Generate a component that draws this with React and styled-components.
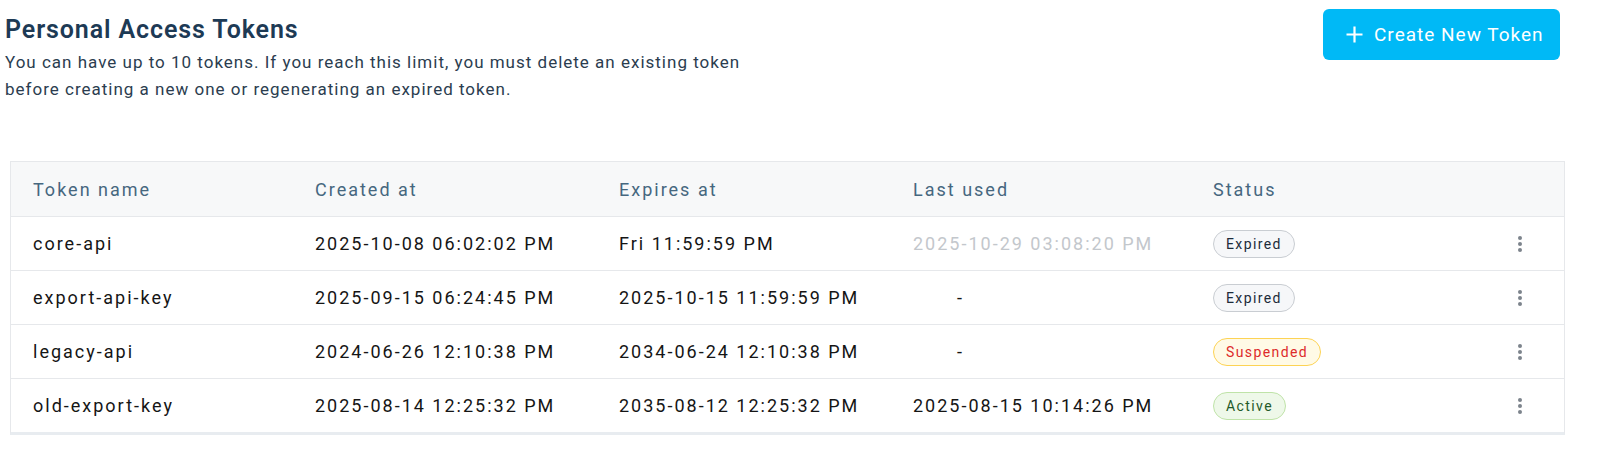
import React from 'react';
import styled, { createGlobalStyle } from 'styled-components';

const GlobalStyle = createGlobalStyle`
  body {
    margin: 0;
    background: #fff;
    font-family: Roboto, 'Liberation Sans', sans-serif;
    color: #1a1a1a;
  }
`;

const Page = styled.div`
  padding: 0 0 0 5px;
`;

const Header = styled.div`
  display: flex;
  justify-content: space-between;
  align-items: flex-start;
  padding-right: 39px;
`;

const Intro = styled.div`
  padding-top: 16px;
`;

const Title = styled.h1`
  margin: 0;
  font-size: 25px;
  font-weight: 600;
  letter-spacing: 0.9px;
  color: #1d3a55;
  line-height: 28px;
`;

const Subtitle = styled.p`
  margin: 5px 0 0;
  width: 760px;
  font-size: 17px;
  line-height: 27px;
  letter-spacing: 1px;
  color: #2b3d4f;
`;

const CreateButton = styled.button`
  margin-top: 9px;
  height: 51px;
  width: 237px;
  padding: 0 0 0 23px;
  display: flex;
  align-items: center;
  gap: 11px;
  border: none;
  border-radius: 6px;
  background: #00b9f6;
  color: #fff;
  font-family: inherit;
  font-size: 19px;
  letter-spacing: 1px;
  cursor: pointer;
`;

const Table = styled.div`
  margin: 58px 34px 0 5px;
  border: 1px solid #e6e8eb;
  border-bottom: 3px solid #e8ecf0;
`;

const Row = styled.div`
  display: grid;
  grid-template-columns: 282px 304px 294px 300px 1fr 60px;
  align-items: center;
  height: 54px;
  padding-left: 22px;
  background: ${(p) => (p.head ? '#f7f8f9' : '#fff')};
  border-top: ${(p) => (p.first ? 'none' : '1px solid #e6e8eb')};
  box-sizing: border-box;
`;

const HeadCell = styled.div`
  font-size: 18px;
  color: #46677f;
  letter-spacing: 2px;
`;

const Cell = styled.div`
  font-size: 18px;
  letter-spacing: 2px;
  white-space: nowrap;
  color: ${(p) => (p.muted ? '#c3c7cc' : '#151515')};
  padding-left: ${(p) => (p.dash ? '44px' : '0')};
`;

const badgeColors = {
  Expired: { border: '#c9cdd2', bg: '#f6f7f9', color: '#1c2b3a' },
  Suspended: { border: '#fdd354', bg: '#fffae6', color: '#dd2a2a' },
  Active: { border: '#bfe3a8', bg: '#eef8e9', color: '#1f5a2a' },
};

const Badge = styled.span`
  display: inline-flex;
  align-items: center;
  height: 28px;
  padding: 0 12px;
  border-radius: 14px;
  box-sizing: border-box;
  font-size: 14px;
  letter-spacing: 1.4px;
  border: 1px solid ${(p) => badgeColors[p.status].border};
  background: ${(p) => badgeColors[p.status].bg};
  color: ${(p) => badgeColors[p.status].color};
`;

const Kebab = styled.div`
  display: flex;
  flex-direction: column;
  align-items: center;
  gap: 2px;
  width: 6px;
  margin-left: 13px;

  span {
    width: 4px;
    height: 4px;
    border-radius: 50%;
    background: #7c848c;
  }
`;

const tokens = [
  {
    name: 'core-api',
    created: '2025-10-08 06:02:02 PM',
    expires: 'Fri 11:59:59 PM',
    lastUsed: '2025-10-29 03:08:20 PM',
    muted: true,
    status: 'Expired',
  },
  {
    name: 'export-api-key',
    created: '2025-09-15 06:24:45 PM',
    expires: '2025-10-15 11:59:59 PM',
    lastUsed: null,
    status: 'Expired',
  },
  {
    name: 'legacy-api',
    created: '2024-06-26 12:10:38 PM',
    expires: '2034-06-24 12:10:38 PM',
    lastUsed: null,
    status: 'Suspended',
  },
  {
    name: 'old-export-key',
    created: '2025-08-14 12:25:32 PM',
    expires: '2035-08-12 12:25:32 PM',
    lastUsed: '2025-08-15 10:14:26 PM',
    status: 'Active',
  },
];

const PlusIcon = () => (
  <svg width="17" height="17" viewBox="0 0 17 17">
    <path d="M8.5 0.5v16M0.5 8.5h16" stroke="#fff" strokeWidth="2.2" />
  </svg>
);

const App = () => (
  <Page>
    <GlobalStyle />
    <Header>
      <Intro>
        <Title>Personal Access Tokens</Title>
        <Subtitle>
          You can have up to 10 tokens. If you reach this limit, you must delete an existing
          token before creating a new one or regenerating an expired token.
        </Subtitle>
      </Intro>
      <CreateButton>
        <PlusIcon />
        Create New Token
      </CreateButton>
    </Header>
    <Table>
      <Row head first>
        <HeadCell>Token name</HeadCell>
        <HeadCell>Created at</HeadCell>
        <HeadCell>Expires at</HeadCell>
        <HeadCell>Last used</HeadCell>
        <HeadCell>Status</HeadCell>
        <div />
      </Row>
      {tokens.map((t) => (
        <Row key={t.name}>
          <Cell>{t.name}</Cell>
          <Cell>{t.created}</Cell>
          <Cell>{t.expires}</Cell>
          <Cell muted={t.muted} dash={!t.lastUsed}>
            {t.lastUsed || '-'}
          </Cell>
          <div>
            <Badge status={t.status}>{t.status}</Badge>
          </div>
          <Kebab>
            <span />
            <span />
            <span />
          </Kebab>
        </Row>
      ))}
    </Table>
  </Page>
);

export default App;
